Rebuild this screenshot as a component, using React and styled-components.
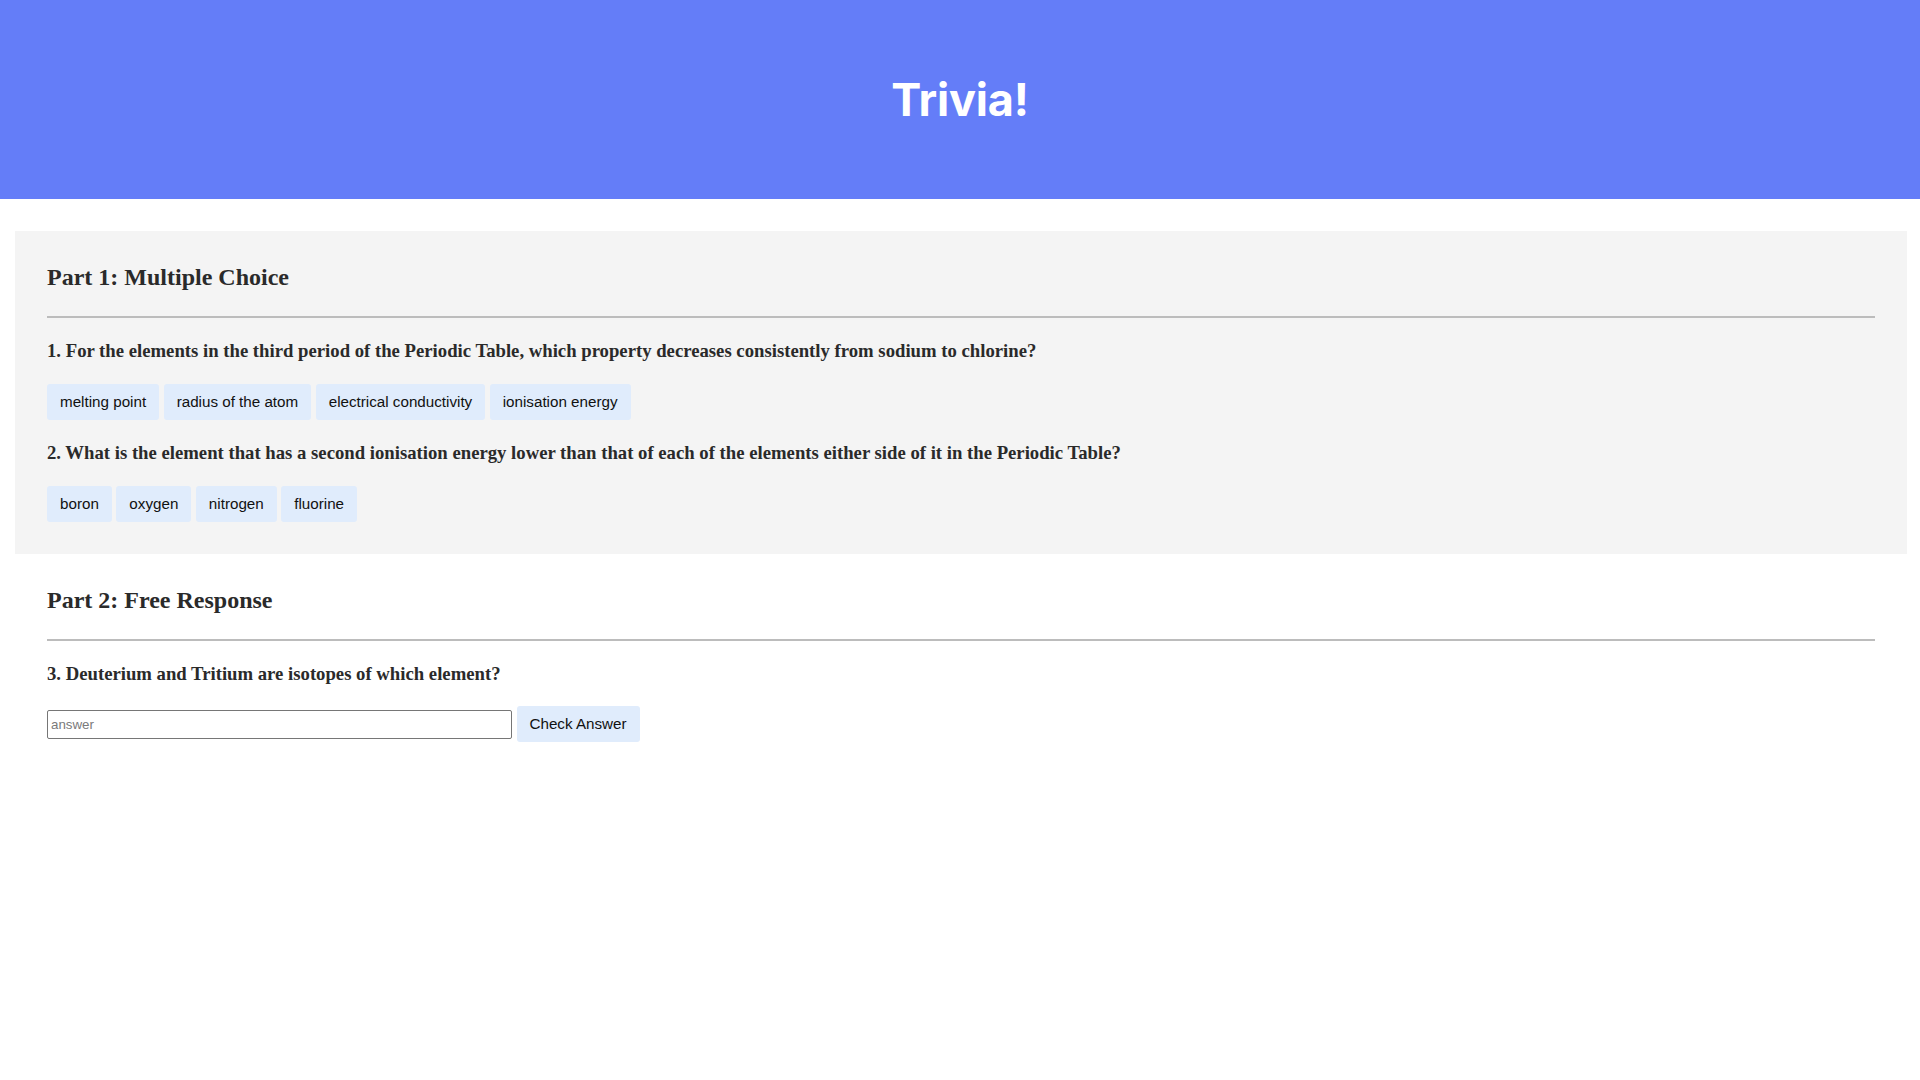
import React from "react";
import styled, { createGlobalStyle } from "styled-components";

const GlobalStyle = createGlobalStyle`
  body {
    margin: 0;
    background: #fff;
    font-family: "Liberation Serif", "Times New Roman", serif;
    color: #2a2a2a;
  }
`;

const Header = styled.header`
  height: 199px;
  background-color: #647df8;
  display: flex;
  align-items: center;
  justify-content: center;

  h1 {
    margin: 0;
    font-family: Inter, "Noto Sans", sans-serif;
    font-weight: 700;
    font-size: 45px;
    color: #fff;
    letter-spacing: -0.2px;
  }
`;

const Section = styled.section`
  margin: ${(props) => (props.shaded ? "32px 13px 0 15px" : "0 13px 0 15px")};
  padding: 32px;
  background-color: ${(props) => (props.shaded ? "#f4f4f4" : "transparent")};
`;

const SectionTitle = styled.h2`
  margin: 0;
  font-size: 24px;
  line-height: 28px;
  font-weight: 700;
`;

const Rule = styled.hr`
  margin: 25px 0 22px;
  height: 0;
  border: none;
  border-top: 2px solid #bcbcbc;
`;

const Question = styled.h3`
  margin: 0 0 22px;
  font-size: 18.72px;
  line-height: 22px;
  font-weight: 700;
`;

const Options = styled.div`
  display: flex;
  gap: 4.5px;
  margin-bottom: ${(props) => (props.last ? "0" : "22px")};
`;

const OptionButton = styled.button`
  font-family: "Liberation Sans", Arial, sans-serif;
  font-size: 15.2px;
  line-height: 18px;
  padding: 9px 13px;
  border: none;
  border-radius: 3px;
  background-color: #e0ecfc;
  color: #111;
  cursor: pointer;

  &:hover {
    background-color: #d2e3fa;
  }
`;

const AnswerRow = styled.div`
  display: flex;
  align-items: center;
  gap: 4.5px;
  margin-top: -1px;
`;

const AnswerInput = styled.input`
  box-sizing: border-box;
  width: 465px;
  height: 29px;
  padding: 1px 3px;
  border: 1px solid #767676;
  border-radius: 2px;
  font-family: "Liberation Sans", Arial, sans-serif;
  font-size: 13.33px;
  color: #111;
  background: #fff;

  &::placeholder {
    color: #7a7a7a;
  }
`;

const questions = [
  {
    text: "1. For the elements in the third period of the Periodic Table, which property decreases consistently from sodium to chlorine?",
    options: ["melting point", "radius of the atom", "electrical conductivity", "ionisation energy"],
  },
  {
    text: "2. What is the element that has a second ionisation energy lower than that of each of the elements either side of it in the Periodic Table?",
    options: ["boron", "oxygen", "nitrogen", "fluorine"],
  },
];

const App = () => {
  return (
    <>
      <GlobalStyle />
      <Header>
        <h1>Trivia!</h1>
      </Header>

      <Section shaded>
        <SectionTitle>Part 1: Multiple Choice</SectionTitle>
        <Rule />
        {questions.map((q, i) => (
          <div key={q.text}>
            <Question>{q.text}</Question>
            <Options last={i === questions.length - 1}>
              {q.options.map((opt) => (
                <OptionButton key={opt}>{opt}</OptionButton>
              ))}
            </Options>
          </div>
        ))}
      </Section>

      <Section>
        <SectionTitle>Part 2: Free Response</SectionTitle>
        <Rule />
        <Question>3. Deuterium and Tritium are isotopes of which element?</Question>
        <AnswerRow>
          <AnswerInput type="text" placeholder="answer" />
          <OptionButton>Check Answer</OptionButton>
        </AnswerRow>
      </Section>
    </>
  );
};

export default App;
